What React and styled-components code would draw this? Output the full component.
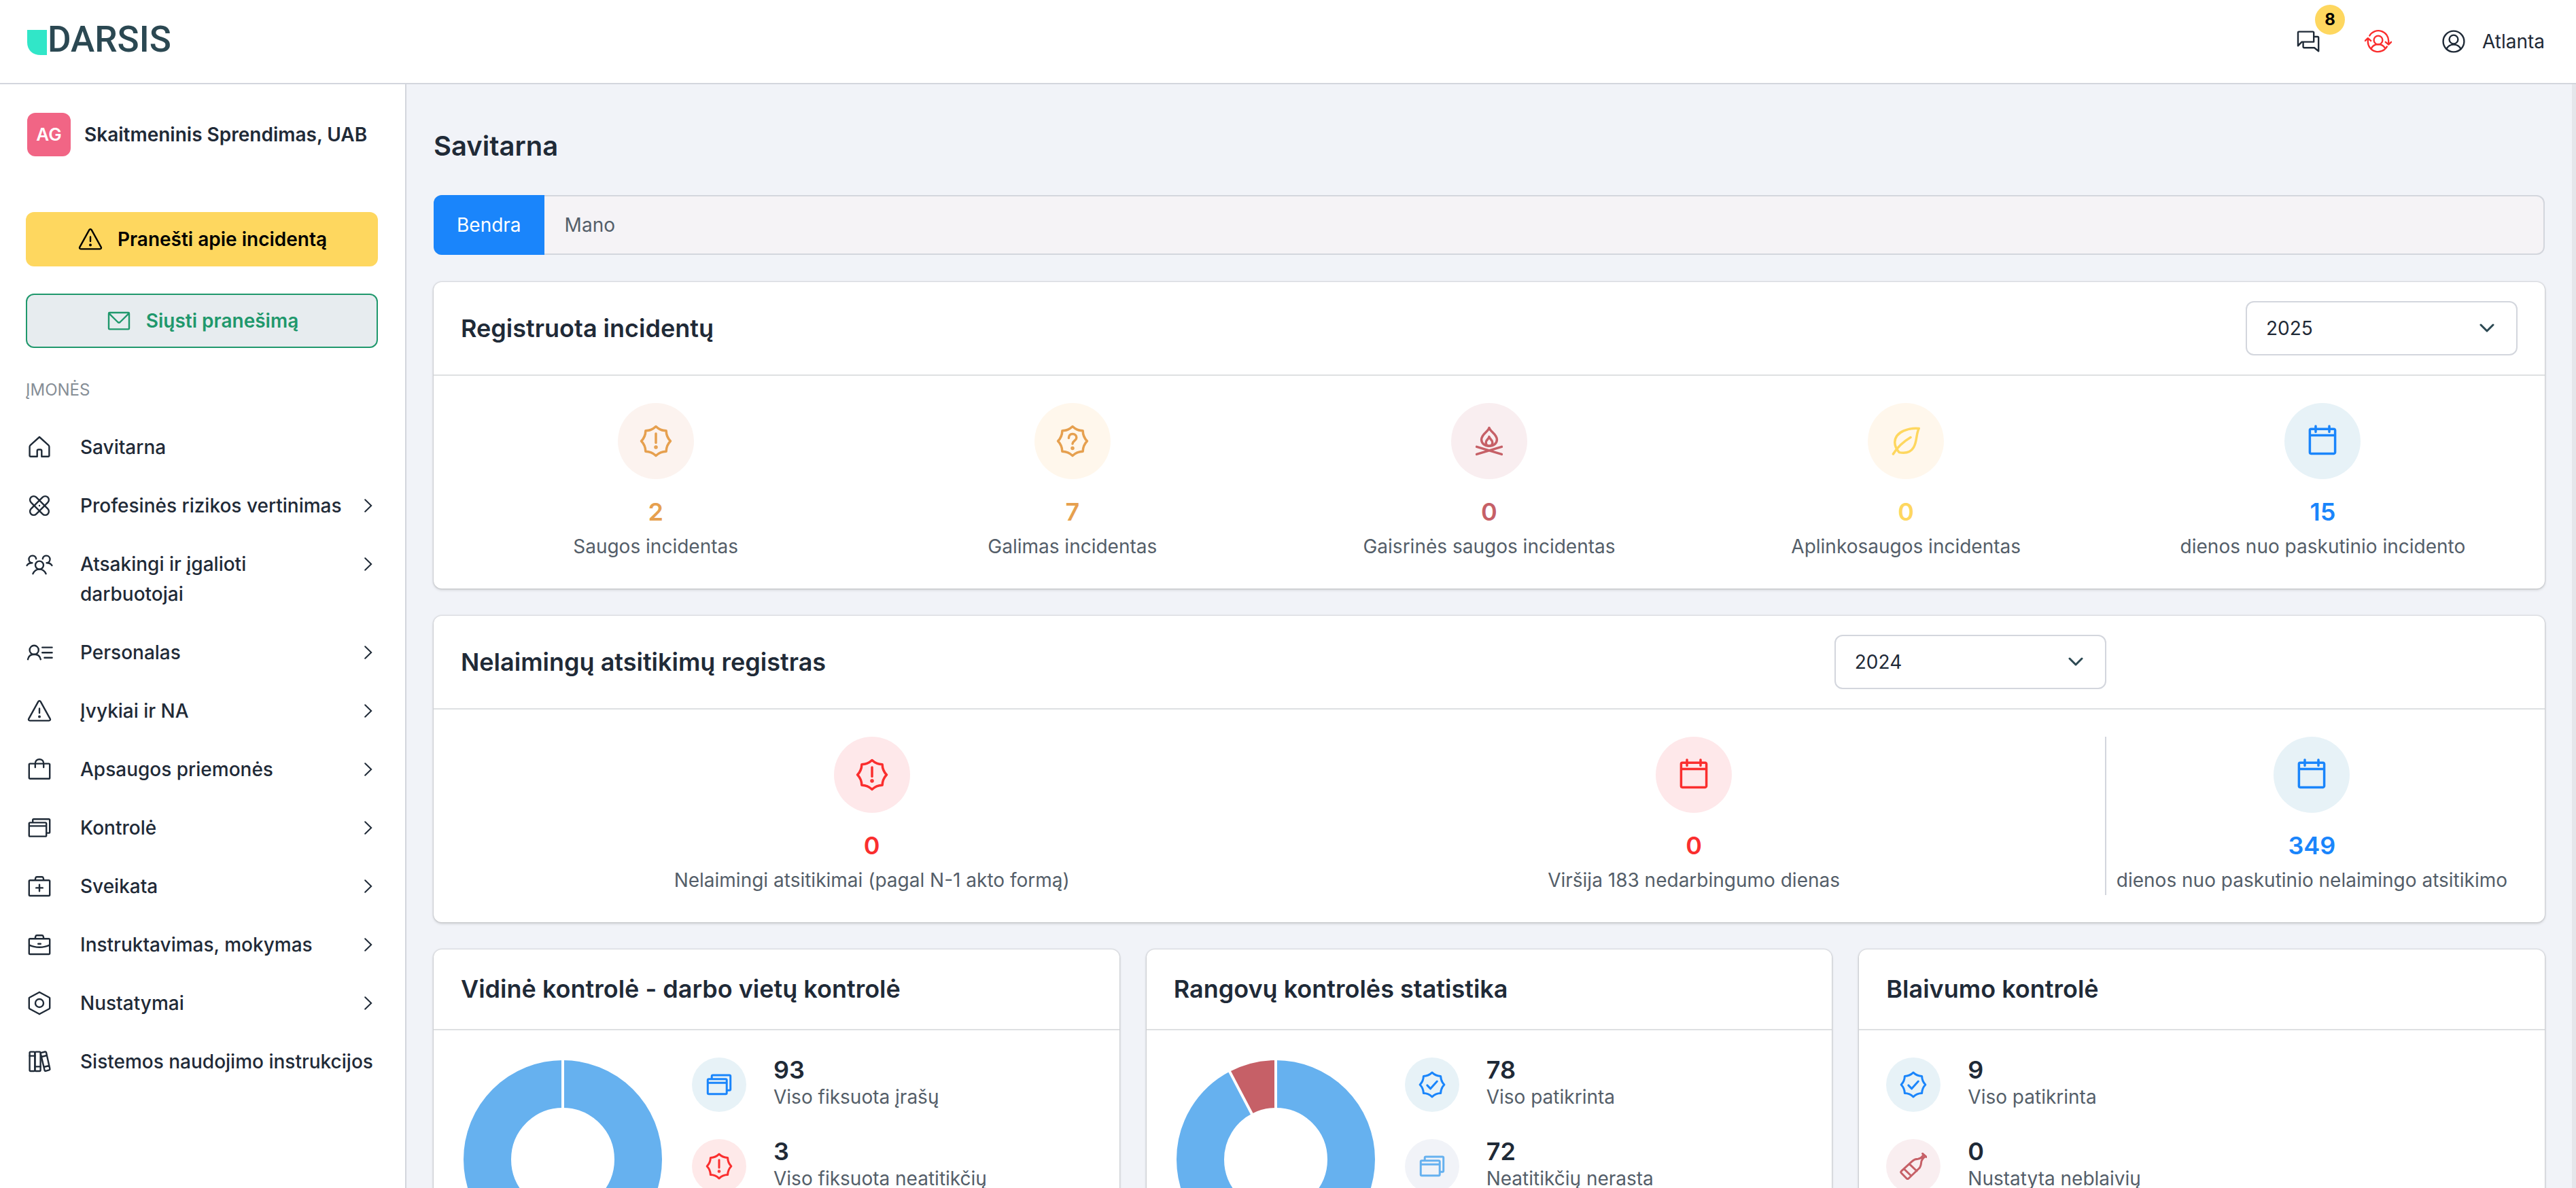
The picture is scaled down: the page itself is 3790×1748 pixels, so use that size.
import React, { useState } from 'react'
import styled, { createGlobalStyle } from 'styled-components'

const colors = {
  text: '#1f2a37',
  muted: '#545e69',
  border: '#d3d6dd',
  divider: '#dee0e2',
  page: '#f1f3f8',
  blue: '#1a85fb',
  sky: '#66b1ef',
  yellow: '#fed75f',
  orange: '#e6a04f',
  red: '#fa2e2e',
  wine: '#c66067',
  green: '#1f986c',
}

// eight pointed outline shared by the alert, question and check badges
const badgePath = () => {
  const point = (r, deg) => {
    const a = (deg * Math.PI) / 180
    return `${(24 + r * Math.sin(a)).toFixed(2)} ${(24 - r * Math.cos(a)).toFixed(2)}`
  }
  let d = `M${point(21.4, 0)}`
  for (let i = 0; i < 8; i++) {
    d += ` Q${point(16.6, i * 45 + 22.5)} ${point(21.4, i * 45 + 45)}`
  }
  return d + 'Z'
}
const BADGE = badgePath()

const icons = {
  home: {
    box: 40,
    art: <path d="M20 5 6.6 17.2a3 3 0 0 0-1 2.2v13a1.4 1.4 0 0 0 1.4 1.4h9.7v-8.3a2 2 0 0 1 2-2h2.6a2 2 0 0 1 2 2v8.3H33a1.4 1.4 0 0 0 1.4-1.4v-13a3 3 0 0 0-1-2.2Z" />,
  },
  bandage: {
    box: 40,
    art: (
      <>
        <rect x="2.6" y="14.6" width="34.8" height="10.8" rx="5.4" transform="rotate(45 20 20)" />
        <rect x="2.6" y="14.6" width="34.8" height="10.8" rx="5.4" transform="rotate(-45 20 20)" />
        <path d="M20 20h.01" />
      </>
    ),
  },
  group: {
    box: 40,
    art: (
      <>
        <circle cx="20" cy="21.6" r="6" />
        <path d="M10.4 34.2c1.4-3 4-6.6 9.6-6.6s8.2 3.600 9.6 6.6" />
        <path d="M15.2 12.2a5.4 5.4 0 1 0-5.8 6.2M1.6 22c1.4-2.4 4-3.8 7.8-3.8" />
        <path d="M24.8 12.2a5.4 5.4 0 1 1 5.8 6.2M38.4 22c-1.4-2.4-4-3.8-7.8-3.8" />
      </>
    ),
  },
  staff: {
    box: 40,
    art: (
      <>
        <circle cx="12.2" cy="16.4" r="6.6" />
        <path d="M3 30.200c1-4.600 4.600-7.400 9.400-7.400s8.400 2.800 9.400 7.400M24.200 12.600h14.400M24.200 20.200h14.400M27.400 27.800h11.200" />
      </>
    ),
  },
  warning: {
    box: 40,
    art: (
      <>
        <path d="M18.400 6.200 4.300 31.600c-.8 1.400 0 2.800 1.600 2.800h28.200c1.600 0 2.400-1.400 1.600-2.800L21.600 6.200c-.8-1.400-2.400-1.400-3.200 0ZM20 16.500v6.500" />
        <circle cx="20" cy="28.4" r=".8" fill="currentColor" />
      </>
    ),
  },
  bag: {
    box: 40,
    art: <path d="M6.200 11.600h27.600a1.400 1.400 0 0 1 1.400 1.400v19.400a1.400 1.400 0 0 1-1.400 1.400H6.200a1.400 1.400 0 0 1-1.400-1.400V13a1.400 1.400 0 0 1 1.400-1.400ZM13.800 17v-5.600c0-3.600 2.600-6.200 6.200-6.200s6.200 2.600 6.200 6.200V17" />,
  },
  windows: {
    box: 40,
    art: <path d="M6.200 12.400h22.600a1.400 1.400 0 0 1 1.400 1.400v17.400a1.400 1.400 0 0 1-1.400 1.400H6.200a1.400 1.400 0 0 1-1.400-1.400V13.800a1.400 1.400 0 0 1 1.400-1.400ZM4.800 17.400h25.400M10.200 12V8.600a1.400 1.400 0 0 1 1.400-1.400h22.200a1.400 1.400 0 0 1 1.400 1.400v17.600a1.400 1.400 0 0 1-1.400 1.400h-3.400" />,
  },
  health: {
    box: 40,
    art: <path d="M6.200 11.200h27.600a1.400 1.400 0 0 1 1.400 1.400v20a1.400 1.400 0 0 1-1.400 1.400H6.200a1.400 1.400 0 0 1-1.400-1.400v-20a1.400 1.400 0 0 1 1.400-1.400ZM13.600 11l.8-3.400a2 2 0 0 1 2-1.400h7.200a2 2 0 0 1 2 1.400l.8 3.400M20 17.600v9.600M15.200 22.400h9.600" />,
  },
  briefcase: {
    box: 40,
    art: <path d="M6.200 11.200h27.600a1.400 1.400 0 0 1 1.400 1.400v20a1.400 1.400 0 0 1-1.400 1.400H6.200a1.400 1.400 0 0 1-1.400-1.400v-20a1.400 1.400 0 0 1 1.400-1.400ZM13.600 11l.8-3.400a2 2 0 0 1 2-1.400h7.200a2 2 0 0 1 2 1.400l.8 3.400M4.800 20.200c9 4.800 21.400 4.800 30.400 0M18.200 18.800h3.600" />,
  },
  settings: {
    box: 40,
    art: (
      <>
        <path d="M19.400 4.200 5.400 11.800a1 1 0 0 0-.6 1v14.400a1 1 0 0 0 .6 1l14 7.600a1.400 1.400 0 0 0 1.200 0l14-7.600a1 1 0 0 0 .6-1V12.800a1 1 0 0 0-.6-1l-14-7.600a1.400 1.400 0 0 0-1.200 0Z" />
        <circle cx="20" cy="20" r="6" />
      </>
    ),
  },
  books: {
    box: 40,
    art: (
      <>
        <rect x="5.6" y="5.6" width="7.8" height="28.4" rx="1.4" />
        <rect x="13.4" y="5.6" width="8.2" height="28.4" rx="1.4" />
        <path d="M5.600 11.600h7.800M13.400 27.400h8.200" />
        <path d="m23 6.900 5.400-1.400a1.300 1.300 0 0 1 1.600 1l5.400 24.200a1.300 1.300 0 0 1-1 1.600l-5.200 1.500a1.300 1.300 0 0 1-1.600-1L21.800 8.400a1.300 1.300 0 0 1 1.200-1.500ZM22.800 13l8-2M26.400 28l8-2" />
      </>
    ),
  },
  mail: {
    box: 40,
    art: <path d="M6.200 8h27.600a1.200 1.200 0 0 1 1.200 1.200v22a1.200 1.200 0 0 1-1.200 1.200H6.200A1.200 1.200 0 0 1 5 31.200v-22A1.200 1.200 0 0 1 6.200 8ZM5.400 9.200 18.400 22a2.400 2.400 0 0 0 3.200 0L34.600 9.200" />,
  },
  chat: {
    box: 40,
    art: <path d="M6.200 5.600h20.600a1.400 1.400 0 0 1 1.400 1.400v13.600H10.600L5 26.400V6.800a1.200 1.200 0 0 1 1.200-1.200ZM28.400 13h5.400a1.400 1.400 0 0 1 1.400 1.400v19.800l-6.200-5H14a1.400 1.400 0 0 1-1.400-1.400v-6.400" />,
  },
  userSwap: {
    box: 40,
    art: (
      <>
        <circle cx="20" cy="18" r="6.4" />
        <path d="M10 29.800c2-3.600 5.600-5.600 10-5.600s8 2 10 5.600" />
        <path d="M7.400 11.400a15 15 0 0 1 27.800 8.600v4M30.800 20.800l4.400 3.800 4-3.800M32.800 27.600A15 15 0 0 1 4.800 20v-4M.8 19l4-3.800L9.200 19" />
      </>
    ),
  },
  user: {
    box: 40,
    art: (
      <>
        <circle cx="20" cy="20" r="15.4" />
        <circle cx="20" cy="17" r="6.4" />
        <path d="M9.400 31.200c2-4.200 5.800-6.600 10.600-6.600s8.600 2.400 10.600 6.600" />
      </>
    ),
  },
  alertBadge: {
    box: 48,
    art: (
      <>
        <path d={BADGE} />
        <path d="M24 13v13.400" />
        <circle cx="24" cy="33" r="1" fill="currentColor" />
      </>
    ),
  },
  questionBadge: {
    box: 48,
    art: (
      <>
        <path d={BADGE} />
        <path d="M18.400 19.600c0-3.600 2.200-6 5.600-6s5.800 2.200 5.800 5.400c0 4.200-5.600 4.600-5.800 9" />
        <circle cx="24" cy="34.4" r="1" fill="currentColor" />
      </>
    ),
  },
  checkBadge: {
    box: 48,
    art: (
      <>
        <path d={BADGE} />
        <path d="m15.400 25 5.800 6 11.600-13" />
      </>
    ),
  },
  fire: {
    box: 48,
    art: (
      <>
        <path d="M24 4.400c1 5.600 11.400 9 11.400 17.400 0 5.800-4.800 9.400-11.400 9.400s-11.400-3.600-11.400-9.400c0-8.400 10.400-11.800 11.400-17.400Z" />
        <path d="M24 17.600c.6 3.400 4.800 4.400 4.800 8.600 0 3-2 5-4.800 5s-4.800-2-4.800-5c0-4.200 4.200-5.200 4.800-8.600Z" />
        <path d="m5.600 32.400 36.800 11M42.400 32.400l-36.800 11" />
      </>
    ),
  },
  leaf: {
    box: 48,
    art: <path d="M43.200 5.400C30 4.200 8.600 9.400 7.800 25.400c-.2 6 2.400 10.600 6.400 15.200 8 1.600 16.600.4 21.200-7.200C40.600 25 39 13.600 43.200 5.400ZM31 18.600C22 24 12 32.400 5.400 43" />,
  },
  calendar: {
    box: 48,
    art: <path d="M7.200 6.200h33.600a1.800 1.800 0 0 1 1.800 1.800v32.600a1.800 1.800 0 0 1-1.800 1.800H7.200a1.800 1.800 0 0 1-1.800-1.800V8a1.800 1.800 0 0 1 1.800-1.800ZM5.400 15.600h37.200M14 2v8.400M34 2v8.400" />,
  },
  bottle: {
    box: 40,
    art: <path d="m33.600 1.400 5.600 5M35 3c-1.800 3.600-4.600 5.800-8.200 6.200-3.600.2-6 1-8.200 3.200L2.400 27.200a2 2 0 0 0 0 2.800l7.800 8a2 2 0 0 0 2.800 0l15.600-15c2-2 2.600-4.600 3-8.200.4-4 2.400-6.800 6-9M14.200 16.600 25 27M6.400 24l10.400 10" />,
  },
}

const Icon = ({ name, size = 40, stroke = 2.4 }) => {
  const { box, art } = icons[name]
  return (
    <svg
      width={size}
      height={size}
      viewBox={`0 0 ${box} ${box}`}
      fill="none"
      stroke="currentColor"
      strokeWidth={(stroke * box) / size}
      strokeLinecap="round"
      strokeLinejoin="round"
      aria-hidden="true"
    >
      {art}
    </svg>
  )
}

const Chevron = () => (
  <svg width="12" height="20" viewBox="0 0 12 20" fill="none" stroke="currentColor" strokeWidth="2" strokeLinecap="round" aria-hidden="true">
    <path d="m1.200 1.200 9 8.800-9 8.800" />
  </svg>
)

const menu = [
  { icon: 'home', label: 'Savitarna' },
  { icon: 'bandage', label: 'Profesinės rizikos vertinimas', nested: true },
  { icon: 'group', label: 'Atsakingi ir įgalioti darbuotojai', nested: true },
  { icon: 'staff', label: 'Personalas', nested: true },
  { icon: 'warning', label: 'Įvykiai ir NA', nested: true },
  { icon: 'bag', label: 'Apsaugos priemonės', nested: true },
  { icon: 'windows', label: 'Kontrolė', nested: true },
  { icon: 'health', label: 'Sveikata', nested: true },
  { icon: 'briefcase', label: 'Instruktavimas, mokymas', nested: true },
  { icon: 'settings', label: 'Nustatymai', nested: true },
  { icon: 'books', label: 'Sistemos naudojimo instrukcijos' },
]

const incidents = [
  { icon: 'alertBadge', value: 2, label: 'Saugos incidentas', color: colors.orange, tint: '#fcf3ef' },
  { icon: 'questionBadge', value: 7, label: 'Galimas incidentas', color: colors.orange, tint: '#fff7ec' },
  { icon: 'fire', value: 0, label: 'Gaisrinės saugos incidentas', color: colors.wine, tint: '#f9eef0' },
  { icon: 'leaf', value: 0, label: 'Aplinkosaugos incidentas', color: colors.yellow, tint: '#fff7ec' },
  { icon: 'calendar', value: 15, label: 'dienos nuo paskutinio incidento', color: colors.blue, tint: '#e7f2f7' },
]

const accidents = [
  { icon: 'alertBadge', value: 0, label: 'Nelaimingi atsitikimai (pagal N-1 akto formą)', color: colors.red, tint: '#fee8ea' },
  { icon: 'calendar', value: 0, label: 'Viršija 183 nedarbingumo dienas', color: colors.red, tint: '#fee8ea' },
]

const sinceAccident = { icon: 'calendar', value: 349, label: 'dienos nuo paskutinio nelaimingo atsitikimo', color: colors.blue, tint: '#e7f2f7' }

const controls = [
  {
    title: 'Vidinė kontrolė - darbo vietų kontrolė',
    slices: [{ value: 93, color: colors.sky }],
    rows: [
      { icon: 'windows', value: 93, label: 'Viso fiksuota įrašų', color: colors.blue, tint: '#e7f2f7' },
      { icon: 'alertBadge', value: 3, label: 'Viso fiksuota neatitikčių', color: colors.red, tint: '#fee9e9' },
    ],
  },
  {
    title: 'Rangovų kontrolės statistika',
    slices: [
      { value: 72, color: colors.sky },
      { value: 6, color: colors.wine },
    ],
    rows: [
      { icon: 'checkBadge', value: 78, label: 'Viso patikrinta', color: colors.blue, tint: '#e7f2f7' },
      { icon: 'windows', value: 72, label: 'Neatitikčių nerasta', color: colors.sky, tint: '#f1f3f8' },
    ],
  },
  {
    title: 'Blaivumo kontrolė',
    rows: [
      { icon: 'checkBadge', value: 9, label: 'Viso patikrinta', color: colors.blue, tint: '#e7f2f7' },
      { icon: 'bottle', value: 0, label: 'Nustatyta neblaivių', color: colors.wine, tint: '#f9eef0' },
    ],
  },
]

const Donut = ({ slices }) => {
  const total = slices.reduce((sum, slice) => sum + slice.value, 0)
  const radius = 111
  const length = 2 * Math.PI * radius
  let start = 0
  return (
    <svg width="300" height="300" viewBox="0 0 300 300" aria-hidden="true">
      {slices.map((slice) => {
        const share = slice.value / total
        const angle = start * 360
        start += share
        return (
          <g key={slice.color} transform={`rotate(${angle - 90} 150 150)`}>
            <circle
              cx="150"
              cy="150"
              r={radius}
              fill="none"
              stroke={slice.color}
              strokeWidth="70"
              strokeDasharray={`${share * length} ${length}`}
            />
          </g>
        )
      })}
      {slices.map((slice, i) => {
        const before = slices.slice(0, i).reduce((sum, s) => sum + s.value, 0)
        return (
          <path key={slice.color} d="M150 0v78" stroke="#fff" strokeWidth="4" transform={`rotate(${(before / total) * 360} 150 150)`} />
        )
      })}
    </svg>
  )
}

const YearSelect = ({ id, label, value }) => {
  const [year, setYear] = useState(value)
  return (
    <SelectBox>
      <select id={id} aria-label={label} value={year} onChange={(e) => setYear(e.target.value)}>
        <option value="2025">2025</option>
        <option value="2024">2024</option>
        <option value="2023">2023</option>
      </select>
      <svg width="22" height="14" viewBox="0 0 22 14" fill="none" stroke="#2b4852" strokeWidth="3" strokeLinecap="round" strokeLinejoin="round" aria-hidden="true">
        <path d="m2 2 9 9 9-9" />
      </svg>
    </SelectBox>
  )
}

const Stat = ({ icon, value, label, color, tint }) => (
  <StatBox $color={color}>
    <Circle $size={112} $color={color} $tint={tint}>
      <Icon name={icon} size={48} stroke={3.5} />
    </Circle>
    <strong>{value}</strong>
    <span>{label}</span>
  </StatBox>
)

const App = () => {
  const [tab, setTab] = useState('Bendra')
  return (
    <Page>
      <GlobalStyle />
      <Header>
        <Logo href="#">
          <svg width="30" height="38" viewBox="0 0 30 38" aria-hidden="true">
            <path d="M0 0h29v37h-9C8 37 0 30 0 18Z" fill="#31e6c8" />
          </svg>
          <span>DARSIS</span>
        </Logo>
        <Actions>
          <IconButton aria-label="Pranešimai">
            <Icon name="chat" />
            <Badge>8</Badge>
          </IconButton>
          <IconButton aria-label="Keisti vartotoją" $color={colors.red}>
            <Icon name="userSwap" />
          </IconButton>
          <UserButton>
            <Icon name="user" />
            Atlanta
          </UserButton>
        </Actions>
      </Header>
      <Content>
        <Sidebar>
          <Company>
            <Avatar>AG</Avatar>
            Skaitmeninis Sprendimas, UAB
          </Company>
          <Report>
            <Icon name="warning" />
            Pranešti apie incidentą
          </Report>
          <Send>
            <Icon name="mail" />
            Siųsti pranešimą
          </Send>
          <MenuTitle>ĮMONĖS</MenuTitle>
          <nav>
            {menu.map((item) => (
              <MenuItem href="#" key={item.label}>
                <Icon name={item.icon} />
                <span>{item.label}</span>
                {item.nested && <Chevron />}
              </MenuItem>
            ))}
          </nav>
        </Sidebar>
        <Main>
          <h1>Savitarna</h1>
          <Tabs role="tablist">
            {['Bendra', 'Mano'].map((name) => (
              <Tab key={name} role="tab" aria-selected={tab === name} $active={tab === name} onClick={() => setTab(name)}>
                {name}
              </Tab>
            ))}
          </Tabs>
          <Card>
            <CardHeader>
              <h2>Registruota incidentų</h2>
              <YearSelect id="incident-year" label="Incidentų metai" value="2025" />
            </CardHeader>
            <Incidents>
              {incidents.map((item) => (
                <Stat key={item.label} {...item} />
              ))}
            </Incidents>
          </Card>
          <Card>
            <SplitHeader>
              <CardHeading>
                <h2>Nelaimingų atsitikimų registras</h2>
                <YearSelect id="accident-year" label="Nelaimingų atsitikimų metai" value="2024" />
              </CardHeading>
            </SplitHeader>
            <Accidents>
              <AccidentGroup>
                {accidents.map((item) => (
                  <Stat key={item.label} {...item} />
                ))}
              </AccidentGroup>
              <Stat {...sinceAccident} />
            </Accidents>
          </Card>
          <Controls>
            {controls.map((card) => (
              <Card key={card.title}>
                <CardHeader $compact>
                  <h2>{card.title}</h2>
                </CardHeader>
                <ControlBody>
                  {card.slices && <Donut slices={card.slices} />}
                  <ControlList>
                    {card.rows.map((row) => (
                      <li key={row.label}>
                        <Circle $size={80} $color={row.color} $tint={row.tint}>
                          <Icon name={row.icon} size={row.icon === 'windows' ? 44 : 40} stroke={3} />
                        </Circle>
                        <div>
                          <strong>{row.value}</strong>
                          <span>{row.label}</span>
                        </div>
                      </li>
                    ))}
                  </ControlList>
                </ControlBody>
              </Card>
            ))}
          </Controls>
        </Main>
      </Content>
    </Page>
  )
}

export default App

const GlobalStyle = createGlobalStyle`
  * {
    box-sizing: border-box;
  }
  body {
    margin: 0;
    font-family: Inter, "Liberation Sans", sans-serif;
    font-size: 28px;
    line-height: 44px;
    color: ${colors.text};
  }
  h1, h2, ul {
    margin: 0;
    padding: 0;
    font-weight: 600;
  }
  button, select {
    font: inherit;
    color: inherit;
    cursor: pointer;
  }
  a {
    color: inherit;
    text-decoration: none;
  }
  svg {
    flex: none;
    display: block;
  }
`

const Page = styled.div`
  display: flex;
  flex-direction: column;
  height: 100vh;
`

const Header = styled.header`
  display: flex;
  align-items: center;
  justify-content: space-between;
  flex: none;
  padding: 0 46px 0 40px;
  height: 124px;
  border-bottom: 2px solid ${colors.border};
  background: #fff;
`

const Logo = styled.a`
  display: flex;
  align-items: flex-end;
  height: 42px;
  font-family: Roboto, "Liberation Sans", sans-serif;
  font-size: 53px;
  font-weight: 500;
  color: #2b4852;

  span {
    align-self: flex-start;
    line-height: 36px;
  }
`

const Actions = styled.div`
  display: flex;
  align-items: center;
  gap: 63px;
`

const IconButton = styled.button`
  position: relative;
  padding: 0;
  border: 0;
  background: none;
  color: ${(props) => props.$color || colors.text};
`

const Badge = styled.span`
  position: absolute;
  left: 30px;
  bottom: 30px;
  width: 44px;
  height: 44px;
  border-radius: 50%;
  background: ${colors.yellow};
  color: #000;
  font-size: 24px;
  font-weight: 700;
  text-align: center;
`

const UserButton = styled(IconButton)`
  display: flex;
  align-items: center;
  gap: 22px;
  padding-left: 8px;
`

const Content = styled.div`
  display: flex;
  flex: 1;
  min-height: 0;
`

const Sidebar = styled.aside`
  flex: none;
  width: 598px;
  padding: 42px 40px 0 38px;
  border-right: 2px solid ${colors.border};
  background: #fff;
  overflow: hidden;
`

const Company = styled.div`
  display: flex;
  align-items: center;
  gap: 20px;
  padding-left: 2px;
  margin-bottom: 82px;
  font-weight: 600;
  white-space: nowrap;
`

const Avatar = styled.span`
  width: 64px;
  border-radius: 12px;
  background: #f16585;
  color: #fff;
  font-size: 26px;
  line-height: 64px;
  text-align: center;
`

const SideButton = styled.button`
  display: flex;
  align-items: center;
  justify-content: center;
  gap: 20px;
  width: 100%;
  height: 80px;
  margin-bottom: 40px;
  border: 0;
  border-radius: 12px;
  font-weight: 600;
`

const Report = styled(SideButton)`
  background: ${colors.yellow};
  color: #000;
`

const Send = styled(SideButton)`
  border: 2px solid ${colors.green};
  background: #e7ecef;
  color: ${colors.green};
`

const MenuTitle = styled.div`
  margin-bottom: 19px;
  font-size: 24px;
  color: #868e96;
`

const MenuItem = styled.a`
  display: flex;
  align-items: flex-start;
  gap: 20px;
  padding: 21px 8px 21px 0;
  font-weight: 500;

  span {
    flex: 1;
    padding-left: 20px;
  }
  span:last-child {
    white-space: nowrap;
  }
  svg:first-child {
    margin: 2px 0;
  }
  svg:last-child {
    margin: 12px 0;
  }
`

const Main = styled.main`
  flex: 1;
  display: flex;
  flex-direction: column;
  gap: 40px;
  padding: 58px 40px 40px;
  border-right: 6px solid #e5e6eb;
  background: ${colors.page};
  overflow-y: auto;
  scrollbar-width: none;

  h1 {
    font-size: 40px;
    line-height: 65px;
  }
  h2 {
    font-size: 36px;
    line-height: 57px;
  }
`

const Tabs = styled.div`
  display: flex;
  flex: none;
  height: 88px;
  border-radius: 12px;
  box-shadow: inset 0 0 0 2px ${colors.border};
  background: #f5f3f6;
  overflow: hidden;
`

const Tab = styled.button`
  padding: 0 ${(props) => (props.$active ? 34 : 30)}px;
  border: 0;
  background: ${(props) => (props.$active ? colors.blue : 'none')};
  color: ${(props) => (props.$active ? '#fff' : colors.muted)};
`

const Card = styled.section`
  flex: none;
  border-radius: 12px;
  background: #fff;
  box-shadow: 0 0 2px 1px rgba(0, 0, 0, 0.12), 0 2px 4px rgba(0, 0, 0, 0.14);
`

const CardHeader = styled.div`
  display: flex;
  align-items: center;
  justify-content: space-between;
  padding: ${(props) => (props.$compact ? 30 : 28)}px 40px;
  border-bottom: 2px solid ${colors.divider};
`

const SplitHeader = styled.div`
  display: grid;
  grid-template-columns: 4fr 1fr;
  padding: 28px 40px;
  border-bottom: 2px solid ${colors.divider};
`

const CardHeading = styled.div`
  display: flex;
  align-items: center;
  justify-content: space-between;
`

const SelectBox = styled.div`
  display: grid;
  align-items: center;
  width: 400px;

  select,
  svg {
    grid-area: 1 / 1;
  }
  select {
    appearance: none;
    height: 80px;
    padding: 0 28px;
    border: 2px solid ${colors.border};
    border-radius: 12px;
    background: #fff;
  }
  svg {
    justify-self: end;
    margin-right: 34px;
    pointer-events: none;
  }
`

const Incidents = styled.div`
  display: grid;
  grid-template-columns: repeat(5, 1fr);
  padding: 40px 20px;
`

const Accidents = styled.div`
  display: grid;
  grid-template-columns: 4fr 1fr;
  padding: 40px;
`

const AccidentGroup = styled.div`
  display: grid;
  grid-template-columns: repeat(2, 1fr);
  border-right: 2px solid ${colors.border};
`

const StatBox = styled.div`
  display: flex;
  flex-direction: column;
  align-items: center;
  white-space: nowrap;

  strong {
    margin-top: 20px;
    font-size: 36px;
    font-weight: 600;
    line-height: 57px;
    color: ${(props) => props.$color};
  }
  span {
    color: ${colors.muted};
  }
`

const Circle = styled.div`
  display: flex;
  flex: none;
  align-items: center;
  justify-content: center;
  width: ${(props) => props.$size}px;
  height: ${(props) => props.$size}px;
  border-radius: 50%;
  background: ${(props) => props.$tint};
  color: ${(props) => props.$color};
`

const Controls = styled.div`
  display: grid;
  grid-template-columns: repeat(3, 1fr);
  gap: 40px;
`

const ControlBody = styled.div`
  display: flex;
  gap: 40px;
  padding: 40px;
`

const ControlList = styled.ul`
  display: flex;
  flex-direction: column;
  gap: 40px;
  list-style: none;

  li {
    display: flex;
    gap: 40px;
    font-weight: 400;
  }
  strong {
    display: block;
    font-size: 36px;
    font-weight: 600;
    line-height: 36px;
  }
  span {
    color: ${colors.muted};
  }
`
